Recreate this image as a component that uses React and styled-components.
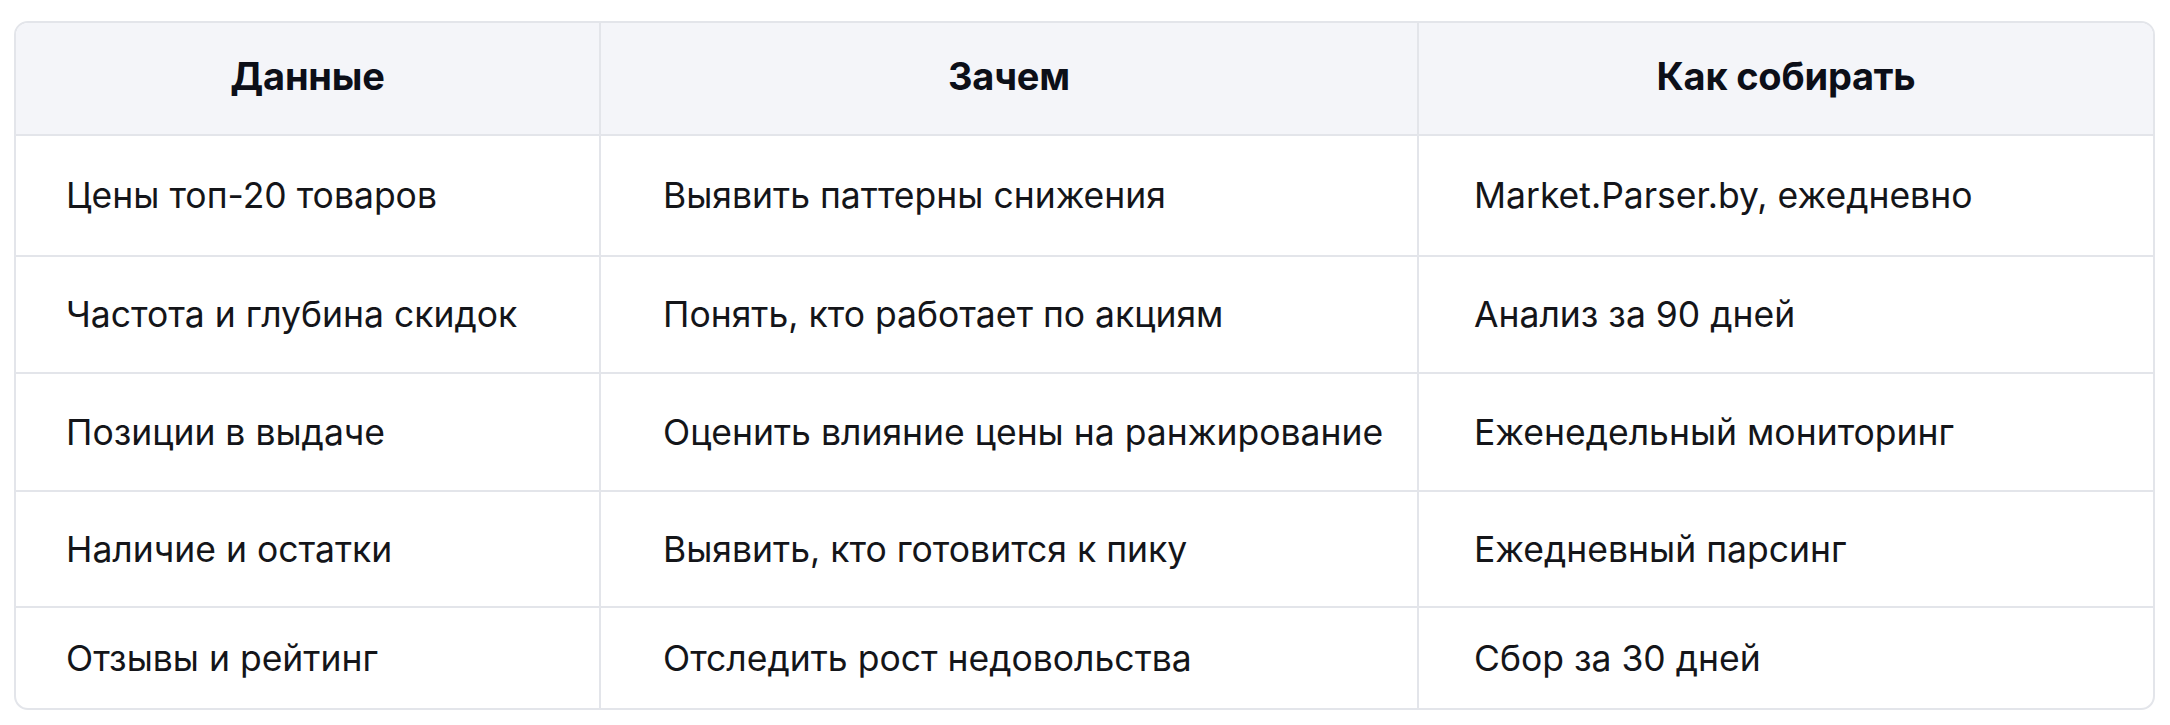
import React from "react";
import styled, { createGlobalStyle } from "styled-components";

const GlobalStyle = createGlobalStyle`
  html, body {
    margin: 0;
    padding: 0;
    background: #ffffff;
  }
  body {
    font-family: "Inter", "Noto Sans", sans-serif;
    color: #131418;
  }
`;

const columns = [
  { title: "Данные", pad: 50 },
  { title: "Зачем", pad: 62 },
  { title: "Как собирать", pad: 55 },
];

const rows = [
  { h: 121, cells: ["Цены топ-20 товаров", "Выявить паттерны снижения", "Market.Parser.by, ежедневно"] },
  { h: 117, cells: ["Частота и глубина скидок", "Понять, кто работает по акциям", "Анализ за 90 дней"] },
  { h: 118, cells: ["Позиции в выдаче", "Оценить влияние цены на ранжирование", "Еженедельный мониторинг"] },
  { h: 116, cells: ["Наличие и остатки", "Выявить, кто готовится к пику", "Ежедневный парсинг"] },
  { h: 102, cells: ["Отзывы и рейтинг", "Отследить рост недовольства", "Сбор за 30 дней"] },
];

export default function App() {
  return (
    <>
      <GlobalStyle />
      <Page>
        <Table>
          <HeadRow>
            {columns.map((c) => (
              <HeadCell key={c.title}>{c.title}</HeadCell>
            ))}
          </HeadRow>
          {rows.map((r) => (
            <Row key={r.cells[0]} $h={r.h}>
              {r.cells.map((text, i) => (
                <Cell key={i} $pad={columns[i].pad}>
                  {text}
                </Cell>
              ))}
            </Row>
          ))}
        </Table>
      </Page>
    </>
  );
}

const Page = styled.div`
  padding: 21px 15px 17px 14px;
`;

const Table = styled.div`
  border: 2px solid #e3e5ea;
  border-radius: 14px;
  overflow: hidden;
  background: #ffffff;
`;

const grid = `
  display: grid;
  grid-template-columns: 583px 818px 1fr;
`;

const HeadRow = styled.div`
  ${grid}
  height: 111px;
  background: #f4f5f9;
`;

const HeadCell = styled.div`
  display: flex;
  align-items: center;
  justify-content: center;
  padding-bottom: 5px;
  font-size: 38px;
  font-weight: 700;
  letter-spacing: -0.2px;
  color: #0c0f18;
  & + & {
    border-left: 2px solid #e3e5ea;
  }
`;

const Row = styled.div`
  ${grid}
  height: ${(p) => p.$h}px;
  border-top: 2px solid #e3e5ea;
  box-sizing: border-box;
`;

const Cell = styled.div`
  display: flex;
  align-items: center;
  padding-left: ${(p) => p.$pad}px;
  font-size: 35.5px;
  font-weight: 400;
  color: #141519;
  white-space: nowrap;
  & + & {
    border-left: 2px solid #e3e5ea;
  }
`;
